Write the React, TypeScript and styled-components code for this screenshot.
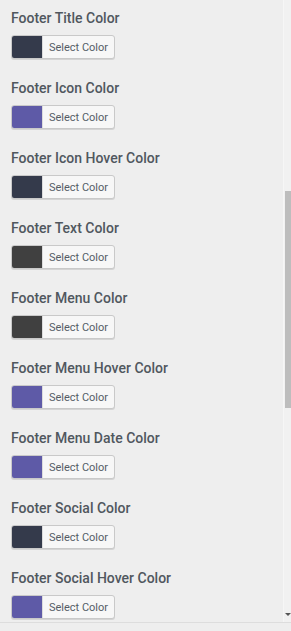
import React from 'react';
import styled, { createGlobalStyle } from 'styled-components';

const GlobalStyle = createGlobalStyle`
  html, body {
    margin: 0;
    padding: 0;
    background: #eeeeee;
    font-family: Roboto, "Noto Sans", "Liberation Sans", sans-serif;
  }
`;

const fields = [
  { label: 'Footer Title Color', color: '#343a4b' },
  { label: 'Footer Icon Color', color: '#5e5aa7' },
  { label: 'Footer Icon Hover Color', color: '#343a4b' },
  { label: 'Footer Text Color', color: '#404040' },
  { label: 'Footer Menu Color', color: '#404040' },
  { label: 'Footer Menu Hover Color', color: '#5e5aa7' },
  { label: 'Footer Menu Date Color', color: '#5e5aa7' },
  { label: 'Footer Social Color', color: '#343a4b' },
  { label: 'Footer Social Hover Color', color: '#5e5aa7' },
];

function App() {
  return (
    <>
      <GlobalStyle />
      <Panel>
        <Viewport>
          <List>
            {fields.map(field => (
              <Field key={field.label}>
                <Title>{field.label}</Title>
                <ColorButton type="button">
                  <Swatch $color={field.color} />
                  <span>Select Color</span>
                </ColorButton>
              </Field>
            ))}
          </List>
          <Track>
            <Thumb />
            <Arrow />
          </Track>
        </Viewport>
        <Footer />
      </Panel>
    </>
  );
}

export default App;

const Panel = styled.div`
  width: 291px;
  height: 631px;
  display: flex;
  flex-direction: column;
  overflow: hidden;
`;

const Viewport = styled.div`
  display: flex;
  height: 622px;
  overflow: hidden;
`;

const List = styled.div`
  flex: 1;
  padding-left: 11px;
`;

const Field = styled.div`
  height: 70px;
  box-sizing: border-box;
  padding-top: 9px;
`;

const Title = styled.div`
  font-size: 14px;
  line-height: 19px;
  font-weight: 500;
  color: #50575e;
  margin-bottom: 7px;
  white-space: nowrap;
`;

const ColorButton = styled.button`
  display: flex;
  align-items: stretch;
  width: 104px;
  height: 24px;
  padding: 0;
  border: 1px solid #c9c9c9;
  border-radius: 3px;
  background: #f7f7f7;
  box-shadow: 0 1px 0 #d4d4d4;
  overflow: hidden;
  font-family: Roboto, "Noto Sans", "Liberation Sans", sans-serif;
  span {
    flex: 1;
    display: flex;
    align-items: center;
    justify-content: center;
    font-size: 11px;
    color: #555d66;
    border-left: 1px solid #dcdcdc;
  }
`;

const Swatch = styled.div<{ $color: string }>`
  width: 30px;
  background: ${p => p.$color};
`;

const Track = styled.div`
  width: 8px;
  box-sizing: border-box;
  border-left: 1px solid #f6f6f6;
  background: #f1f1f1;
  display: flex;
  flex-direction: column;
  align-items: flex-end;
  padding-top: 191px;
  padding-bottom: 6px;
`;

const Thumb = styled.div`
  width: 6px;
  height: 217px;
  background: #bdbdbd;
`;

const Arrow = styled.div`
  margin-top: auto;
  width: 0;
  height: 0;
  border-left: 3px solid transparent;
  border-right: 3px solid transparent;
  border-top: 3px solid #555;
`;

const Footer = styled.div`
  flex: 1;
  border-top: 1px solid #dddddd;
  background: #eeeeee;
`;
